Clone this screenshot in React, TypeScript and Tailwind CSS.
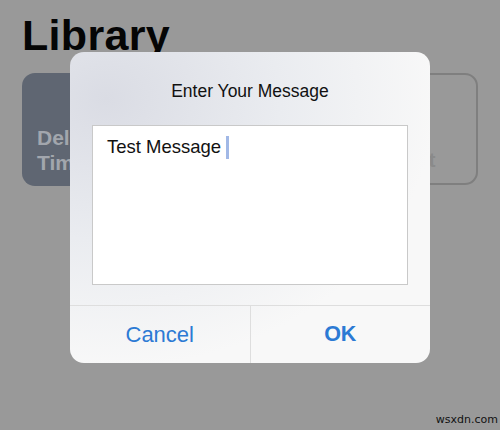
import React from "react";

export default function App() {
  return (
    <div
      className="relative w-[500px] h-[430px] overflow-hidden bg-[#999999]"
      style={{ fontFamily: '"Liberation Sans", Arial, sans-serif' }}
    >
      <div className="px-[22px] pt-[14px]">
        <div className="text-[43px] leading-none font-bold text-[#050505] tracking-[0.3px]">
          Library
        </div>
        <div className="mt-[16px] flex gap-[16px]">
          <div className="w-[220px] h-[113px] rounded-[13px] bg-[#5f6672] flex flex-col justify-end pl-[15px] pb-[11px] text-[21px] leading-[25px] font-semibold text-[#a2a6ad]">
            <div>Delete</div>
            <div>Time</div>
          </div>
          <div className="w-[220px] h-[112px] rounded-[13px] border-2 border-[#7f7f7f] flex flex-col justify-end pl-[30px] pb-[11px] text-[21px] leading-[25px] font-semibold text-[#8a8a8a]">
            <div>Speak</div>
            <div>Clipboard Text</div>
          </div>
        </div>
      </div>

      <div className="absolute left-[70px] top-[52px] w-[360px] h-[311px] rounded-[14px] overflow-hidden flex flex-col bg-[radial-gradient(ellipse_at_10%_15%,#dadce4_0%,#eaecf0_38%,#f8f8f8_72%)]">
        <div className="pt-[27px] text-center text-[17.5px] leading-[24px] text-[#111111]">
          Enter Your Message
        </div>
        <div className="mt-[22px] mx-[22px] h-[160px] bg-white border border-[#c9c9c9] pl-[14px] pt-[9px]">
          <div className="flex items-center text-[18.5px] leading-[24px] text-[#111111]">
            <span>Test Message</span>
            <span className="inline-block w-[2.5px] h-[23px] ml-[5px] bg-[#a1b8e6]" />
          </div>
        </div>
        <div className="mt-auto h-[58px] border-t border-[#dedede] flex">
          <div className="flex-1 flex items-center justify-center text-[22px] text-[#2c7ad4] border-r border-[#dedede]">
            Cancel
          </div>
          <div className="flex-1 flex items-center justify-center text-[21.5px] font-bold text-[#2c7ad4]">
            OK
          </div>
        </div>
      </div>

      <div className="absolute right-[2px] bottom-[2px] text-[11px] text-[#111]" style={{ fontFamily: '"DejaVu Sans", sans-serif' }}>
        wsxdn.com
      </div>
    </div>
  );
}
